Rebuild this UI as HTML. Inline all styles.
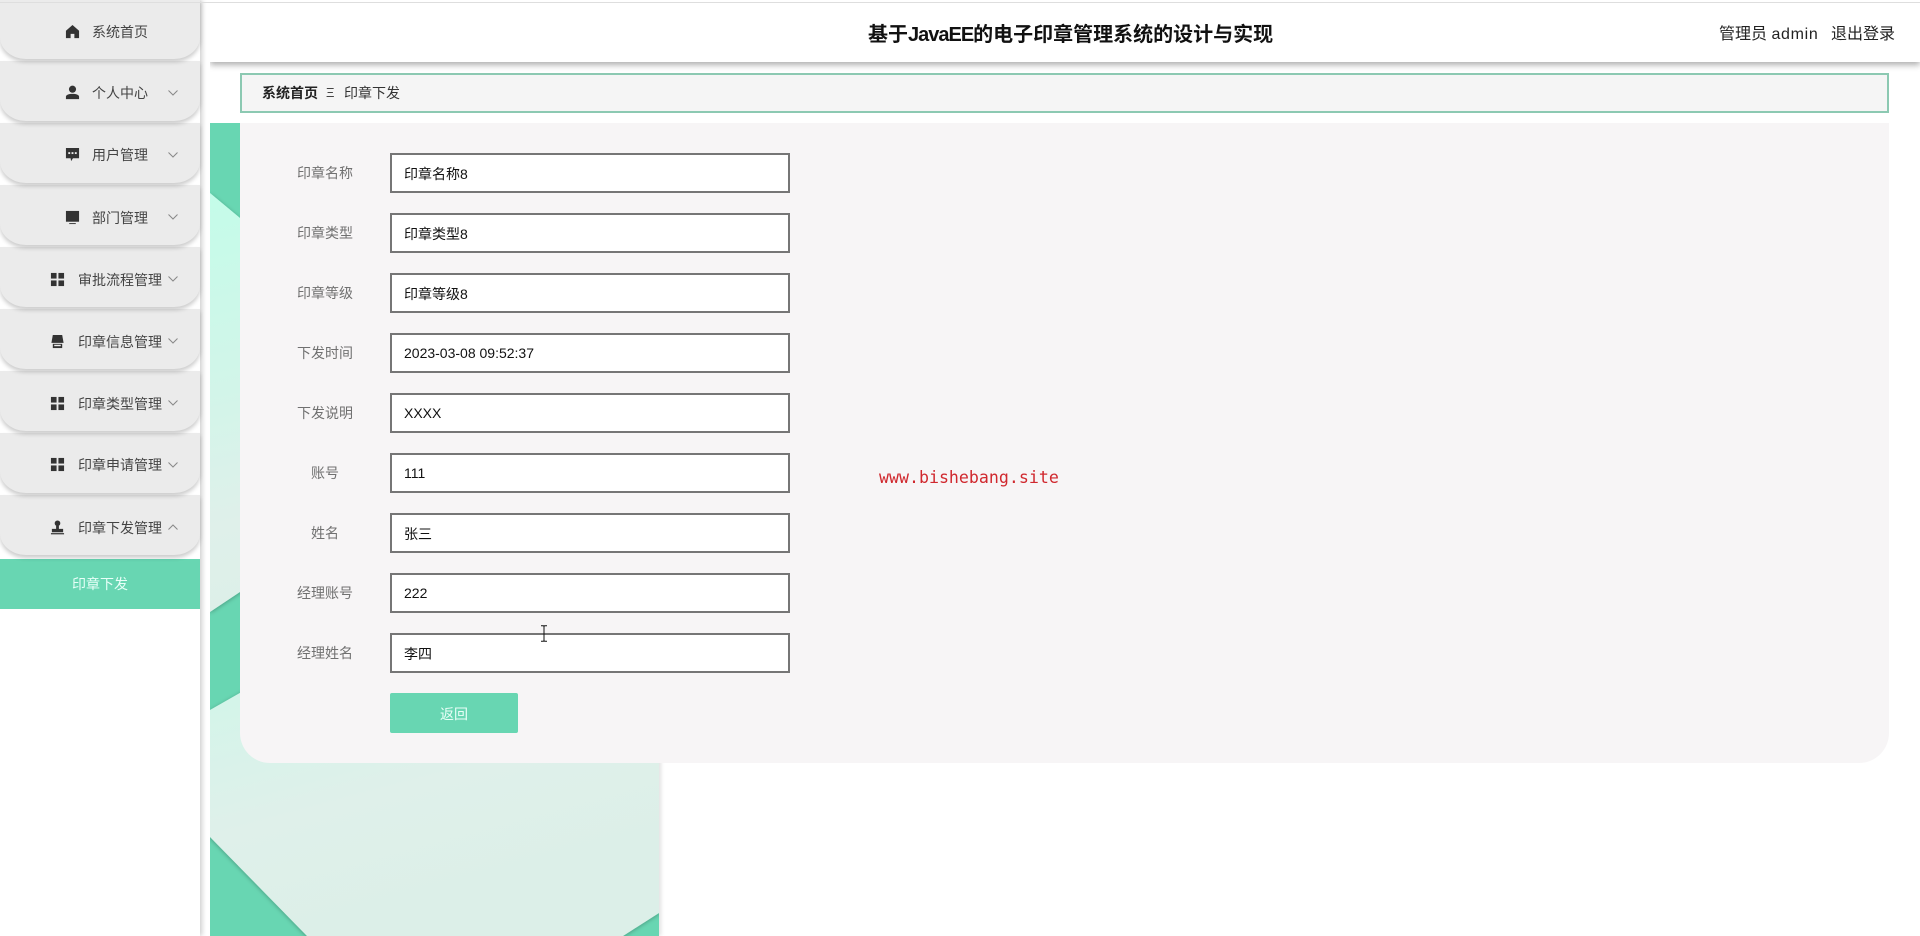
<!DOCTYPE html>
<html lang="zh">
<head>
<meta charset="utf-8">
<title>基于JavaEE的电子印章管理系统的设计与实现</title>
<style>
*{box-sizing:border-box;margin:0;padding:0}
html,body{width:1920px;height:936px;overflow:hidden;background:#fff;font-family:"Liberation Sans","Noto Sans CJK SC",sans-serif}
.abs{position:absolute}
#topline{position:absolute;left:0;top:2px;width:1920px;height:1px;background:#dedede;z-index:30}
#side{position:absolute;left:0;top:0;width:200px;height:936px;background:#fff;box-shadow:2px 0 5px rgba(0,0,0,.2);z-index:20}
.item{position:absolute;left:0;width:200px;height:60px;background:#ebebeb;border-radius:0 0 26px 26px/0 0 22px 22px;box-shadow:0 3px 4px rgba(0,0,0,.2)}
.item span{position:absolute;font-size:14px;line-height:20px;color:#444;white-space:nowrap}
.item svg.ic{position:absolute;width:15px;height:15px;fill:#333}
.item svg.ch{position:absolute;left:168px;width:10px;height:6px;fill:none;stroke:#888;stroke-width:1}
#sub{position:absolute;left:0;top:559px;width:200px;height:50px;background:#68d6b2;color:#e8fff8;font-size:14px;line-height:50px;text-align:center}
#head{position:absolute;left:210px;top:3px;width:1710px;height:59px;background:#fff;box-shadow:0 3px 6px rgba(0,0,0,.32);clip-path:inset(0 0 -14px 0);z-index:10}
#title{position:absolute;left:868px;top:20px;font-size:20px;font-weight:bold;line-height:30px;color:#111;white-space:nowrap;z-index:11}
#title u{text-decoration:none;letter-spacing:-1px}
#user{position:absolute;left:1719px;top:24px;font-size:16px;line-height:22px;color:#222;white-space:nowrap;z-index:11}
#user u{text-decoration:none;letter-spacing:.7px}
#logout{position:absolute;left:1831px;top:24px;font-size:16px;line-height:22px;color:#222;white-space:nowrap;z-index:11}
#crumb{position:absolute;left:240px;top:73px;width:1649px;height:40px;background:#f5f5f5;border:2px solid #8cc9b2;z-index:5}
#crumb b,#crumb i,#crumb em{position:absolute;top:8px;font-style:normal;font-size:14px;line-height:20px;white-space:nowrap}
#bg{position:absolute;left:210px;top:123px;width:449px;height:813px;box-shadow:2px 0 4px rgba(0,0,0,.12);clip-path:inset(0 -10px 0 0)}
#card{position:absolute;left:240px;top:123px;width:1649px;height:640px;background:#f7f5f6;border-radius:0 0 30px 30px;z-index:3}
.lb{position:absolute;left:277px;width:96px;text-align:center;font-size:14px;line-height:20px;color:#707070;z-index:4}
.in{position:absolute;left:390px;width:400px;height:40px;background:#fff;border:2px solid #767676;padding-left:12px;font-size:14px;line-height:37px;color:#111;z-index:4;white-space:nowrap}
.in.c{line-height:39px}
#btn{position:absolute;left:390px;top:693px;width:128px;height:40px;background:#68d6b2;color:#eafff8;text-align:center;font-size:14px;line-height:42px;border-radius:2px;z-index:4}
#wm{position:absolute;left:879px;top:467px;font-family:"DejaVu Sans Mono","Liberation Mono",monospace;font-size:16.6px;line-height:22px;color:#d0282e;white-space:nowrap;z-index:6}
#cur{position:absolute;left:539px;top:625px;width:10px;height:17px;z-index:7}
</style>
</head>
<body>
<div id="topline"></div>

<div id="bg">
<svg width="449" height="813" viewBox="0 0 449 813" style="display:block">
<defs>
<linearGradient id="g" x1="0" y1="0" x2="0.25" y2="1">
<stop offset="0" stop-color="#c4fce9"/>
<stop offset="0.45" stop-color="#d2f5e9"/>
<stop offset="0.75" stop-color="#dff0ea"/>
<stop offset="1" stop-color="#dcefe8"/>
</linearGradient>
<filter id="s" x="-5%" y="-5%" width="110%" height="110%"><feDropShadow dx="0" dy="1" stdDeviation="2" flood-color="#000" flood-opacity=".28"/></filter>
</defs>
<rect width="449" height="813" fill="#68d6b2"/>
<polygon points="0,70 120,170 449,170 449,189 0,489" fill="url(#g)" filter="url(#s)"/>
<polygon points="0,587 449,331 449,790 413,813 97,813 0,714" fill="url(#g)" filter="url(#s)"/>
</svg>
</div>

<div id="side">
<div class="item" style="top:-1px;z-index:9">
<svg class="ic" viewBox="0 0 16 16" style="left:65px;top:25px"><path d="M8 1 1 7.200V15h5v-4.500h4V15h5V7.200z"/></svg>
<span style="left:92px;top:23px">系统首页</span></div>
<div class="item" style="top:61px;z-index:8">
<svg class="ic" viewBox="0 0 16 16" style="left:65px;top:24px"><circle cx="8" cy="4.500" r="3.800"/><path d="M1 15v-2.500C1 10.500 4 9.500 8 9.500s7 1 7 3V15z"/></svg>
<span style="left:92px;top:22px">个人中心</span>
<svg class="ch" viewBox="0 0 10 6" style="top:29px"><path d="M.5.5 5 5 9.500.5"/></svg></div>
<div class="item" style="top:123px;z-index:7">
<svg class="ic" viewBox="0 0 16 16" style="left:65px;top:24px"><path d="M1 1h14v11H8.500L6.500 15l-.5-3H1z"/><g fill="#ebebeb"><rect x="3.500" y="5.500" width="2" height="2"/><rect x="7" y="5.500" width="2" height="2"/><rect x="10.500" y="5.500" width="2" height="2"/></g></svg>
<span style="left:92px;top:22px">用户管理</span>
<svg class="ch" viewBox="0 0 10 6" style="top:29px"><path d="M.5.5 5 5 9.500.5"/></svg></div>
<div class="item" style="top:185px;z-index:6">
<svg class="ic" viewBox="0 0 16 16" style="left:65px;top:25px"><path d="M1 1h14v11.500H1z"/><path d="M4.500 15h7v-1h-7z"/></svg>
<span style="left:92px;top:23px">部门管理</span>
<svg class="ch" viewBox="0 0 10 6" style="top:29px"><path d="M.5.5 5 5 9.500.5"/></svg></div>
<div class="item" style="top:247px;z-index:5">
<svg class="ic" viewBox="0 0 16 16" style="left:50px;top:25px"><rect x="1" y="1" width="6" height="6"/><rect x="9" y="1" width="6" height="6"/><rect x="1" y="9" width="6" height="6"/><rect x="9" y="9" width="6" height="6"/></svg>
<span style="left:78px;top:23px">审批流程管理</span>
<svg class="ch" viewBox="0 0 10 6" style="top:29px"><path d="M.5.5 5 5 9.500.5"/></svg></div>
<div class="item" style="top:309px;z-index:4">
<svg class="ic" viewBox="0 0 16 16" style="left:50px;top:25px"><path d="M3 1h10l1.500 8.500H1.500z"/><path d="M3 10.500h10V15H3z" fill="#333"/><rect x="4.500" y="11.500" width="7" height="1.500" fill="#ebebeb"/></svg>
<span style="left:78px;top:23px">印章信息管理</span>
<svg class="ch" viewBox="0 0 10 6" style="top:29px"><path d="M.5.5 5 5 9.500.5"/></svg></div>
<div class="item" style="top:371px;z-index:3">
<svg class="ic" viewBox="0 0 16 16" style="left:50px;top:25px"><rect x="1" y="1" width="6" height="6"/><rect x="9" y="1" width="6" height="6"/><rect x="1" y="9" width="6" height="6"/><rect x="9" y="9" width="6" height="6"/></svg>
<span style="left:78px;top:23px">印章类型管理</span>
<svg class="ch" viewBox="0 0 10 6" style="top:29px"><path d="M.5.5 5 5 9.500.5"/></svg></div>
<div class="item" style="top:433px;z-index:2">
<svg class="ic" viewBox="0 0 16 16" style="left:50px;top:24px"><rect x="1" y="1" width="6" height="6"/><rect x="9" y="1" width="6" height="6"/><rect x="1" y="9" width="6" height="6"/><rect x="9" y="9" width="6" height="6"/></svg>
<span style="left:78px;top:22px">印章申请管理</span>
<svg class="ch" viewBox="0 0 10 6" style="top:29px"><path d="M.5.5 5 5 9.500.5"/></svg></div>
<div class="item" style="top:495px;z-index:1">
<svg class="ic" viewBox="0 0 16 16" style="left:50px;top:25px"><circle cx="8" cy="3.500" r="3"/><path d="M6.500 6h3v3.500H14V13H2V9.500h4.500z"/><rect x="1" y="14" width="14" height="1.300"/></svg>
<span style="left:78px;top:23px">印章下发管理</span>
<svg class="ch" viewBox="0 0 10 6" style="top:29px"><path d="M.5 5.500 5 1l4.500 4.500"/></svg></div>
<div id="sub">印章下发</div>
</div>

<div id="head"></div>
<div id="title">基于<u>JavaEE</u>的电子印章管理系统的设计与实现</div>
<div id="user">管理员 <u>admin</u></div>
<div id="logout">退出登录</div>

<div id="crumb">
<b style="left:20px;color:#222">系统首页</b>
<i style="left:84px;color:#444;font-size:13px">Ξ</i>
<em style="left:102px;color:#333">印章下发</em>
</div>

<div id="card"></div>

<div class="lb" style="top:163px">印章名称</div><div class="in c" style="top:153px">印章名称8</div>
<div class="lb" style="top:223px">印章类型</div><div class="in c" style="top:213px">印章类型8</div>
<div class="lb" style="top:283px">印章等级</div><div class="in c" style="top:273px">印章等级8</div>
<div class="lb" style="top:343px">下发时间</div><div class="in" style="top:333px">2023-03-08 09:52:37</div>
<div class="lb" style="top:403px">下发说明</div><div class="in" style="top:393px">XXXX</div>
<div class="lb" style="top:463px">账号</div><div class="in" style="top:453px">111</div>
<div class="lb" style="top:523px">姓名</div><div class="in c" style="top:513px">张三</div>
<div class="lb" style="top:583px">经理账号</div><div class="in" style="top:573px">222</div>
<div class="lb" style="top:643px">经理姓名</div><div class="in c" style="top:633px">李四</div>
<div id="btn">返回</div>

<div id="wm">www.bishebang.site</div>
<svg id="cur" viewBox="0 0 10 17"><path d="M2 .7h2.500L5 1.500 5.500.7H8M5 1.500v14M2 16.300h2.500l.5-.8.5.8H8" fill="none" stroke="#111" stroke-width="1"/></svg>
</body>
</html>
